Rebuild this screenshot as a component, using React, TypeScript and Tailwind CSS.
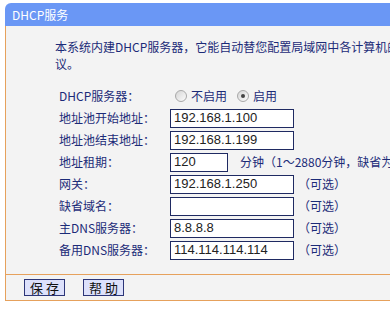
const cjk = "font-['SimSun','Noto_Sans_CJK_SC',sans-serif]";
const latin = "font-['Liberation_Sans','Noto_Sans_CJK_SC',sans-serif]";

const rows: { label: string; value: string; optional?: boolean }[] = [
  { label: "网关：", value: "192.168.1.250", optional: true },
  { label: "缺省域名：", value: "", optional: true },
  { label: "主DNS服务器：", value: "8.8.8.8", optional: true },
  { label: "备用DNS服务器：", value: "114.114.114.114", optional: true },
];

function Radio({ checked }: { checked?: boolean }) {
  return (
    <span className="w-[12px] h-[12px] rounded-full border border-[#a8a8a8] bg-gradient-to-br from-[#d6d6d6] to-[#fbfbfb] flex items-center justify-center shrink-0">
      {checked && <span className="w-[4px] h-[4px] rounded-full bg-[#444]" />}
    </span>
  );
}

function Field({ value, w = "w-[124px]" }: { value: string; w?: string }) {
  return (
    <div
      className={`${w} shrink-0 h-[19px] border border-[#1f2a62] bg-white px-[3px] flex items-center text-[13px] text-[#222] ${latin}`}
    >
      {value}
    </div>
  );
}

function Row({ label, children }: { label: string; children: React.ReactNode }) {
  return (
    <div className="h-[22px] flex items-center">
      <span className="w-[111px] shrink-0 text-[12px] text-[#1c2b78]">{label}</span>
      {children}
    </div>
  );
}

export default function App() {
  return (
    <div className={`w-[390px] h-[311px] overflow-hidden bg-white pt-[3px] pl-[5px] ${cjk}`}>
      <div className="w-[420px]">
        <div className="h-[23px] bg-[#6a97f5] rounded-tl-[6px] flex items-center pl-[7px] text-white text-[12px]">
          DHCP服务
        </div>
        <div className="bg-[#f3f3f3] border-l border-[#e6a15c]">
          <p className="pt-[12px] pl-[49px] text-[12px] leading-[17px] text-[#1c2b78] whitespace-nowrap">
            本系统内建DHCP服务器，它能自动替您配置局域网中各计算机的
            <br />
            议。
          </p>
          <div className="pl-[53px] pt-[13px] pb-[13px]">
            <Row label="DHCP服务器：">
              <div className="flex items-center text-[12px] text-[#1c2b78] pl-[5px]">
                <Radio />
                <span className="ml-[4px]">不启用</span>
                <span className="ml-[10px]" />
                <Radio checked />
                <span className="ml-[4px]">启用</span>
              </div>
            </Row>
            <Row label="地址池开始地址：">
              <Field value="192.168.1.100" />
            </Row>
            <Row label="地址池结束地址：">
              <Field value="192.168.1.199" />
            </Row>
            <Row label="地址租期：">
              <Field value="120" w="w-[58px]" />
              <span className="ml-[12px] text-[12px] text-[#1c2b78] whitespace-nowrap">
                分钟（1～2880分钟，缺省为
              </span>
            </Row>
            {rows.map((r) => (
              <Row key={r.label} label={r.label}>
                <Field value={r.value} />
                <span className="ml-[4px] text-[12px] text-[#1c2b78]">（可选）</span>
              </Row>
            ))}
          </div>
          <div className="border-t border-b border-[#e6a15c] h-[27px] flex items-center pl-[18px] gap-[18px]">
            <button className="w-[41px] h-[17px] bg-[#dde1fb] border border-[#2c3578] text-[13px] leading-none text-[#111] tracking-[3px] pl-[3px]">
              保存
            </button>
            <button className="w-[41px] h-[17px] bg-[#dde1fb] border border-[#2c3578] text-[13px] leading-none text-[#111] tracking-[3px] pl-[3px]">
              帮助
            </button>
          </div>
        </div>
      </div>
    </div>
  );
}
